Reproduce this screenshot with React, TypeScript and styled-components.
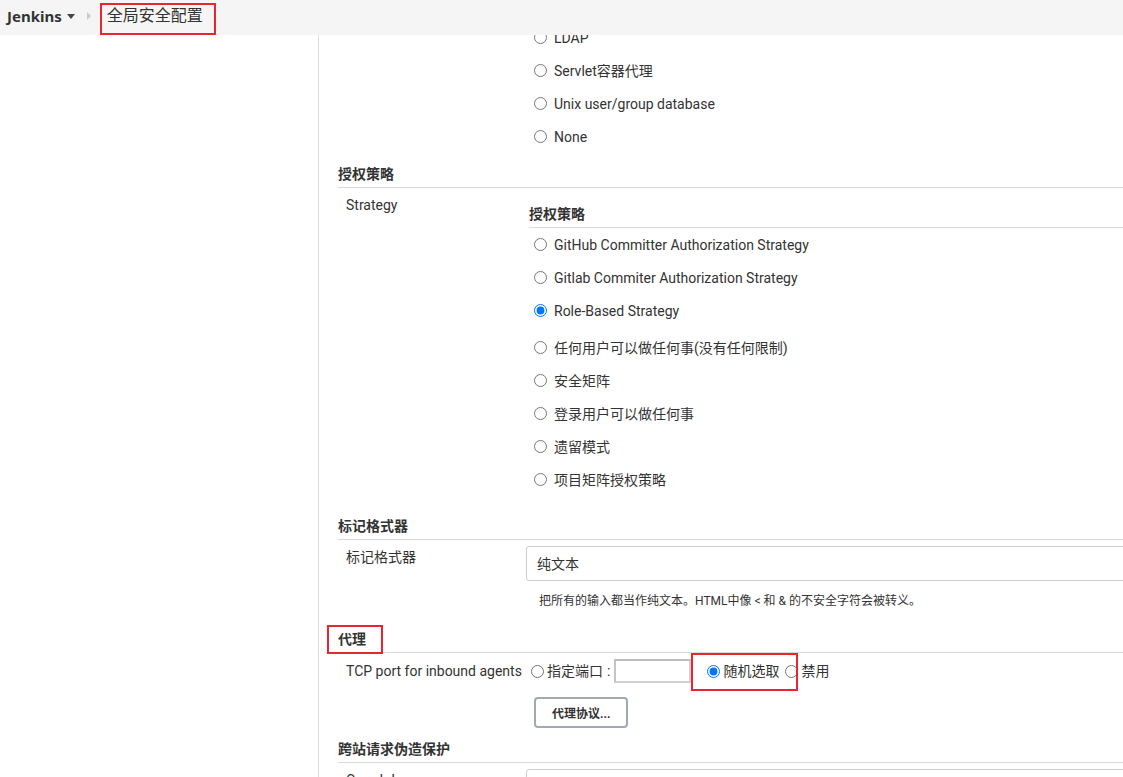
import React from "react";
import styled, { createGlobalStyle } from "styled-components";

const GlobalStyle = createGlobalStyle`
  html, body {
    margin: 0;
    padding: 0;
    height: 777px;
    overflow: hidden;
    background: #ffffff;
  }
  body {
    font-family: Roboto, "Noto Sans CJK SC", sans-serif;
    font-size: 14px;
    color: #333333;
  }
  * { box-sizing: border-box; }
`;

const Header = styled.header`
  position: fixed;
  top: 0;
  left: 0;
  right: 0;
  height: 35px;
  background: #f5f5f5;
  display: flex;
  align-items: center;
  padding: 0 0 3px 7px;
  z-index: 10;
`;

const Brand = styled.span`
  font-family: "Noto Sans", "Noto Sans CJK SC", sans-serif;
  font-weight: 700;
  font-size: 15px;
  color: #333;
  line-height: 20px;
`;

const Caret = styled.span`
  width: 0;
  height: 0;
  margin-left: 5px;
  border-left: 4px solid transparent;
  border-right: 4px solid transparent;
  border-top: 5px solid #444;
`;

const Separator = styled.span`
  width: 0;
  height: 0;
  margin-left: 12px;
  margin-right: 16px;
  border-top: 4px solid transparent;
  border-bottom: 4px solid transparent;
  border-left: 4px solid #cccccc;
`;

const Crumb = styled.span`
  font-size: 16px;
  line-height: 20px;
  color: #333;
`;

const Highlight = styled.span<{ $t: number; $r: number; $b: number; $l: number }>`
  position: relative;
  display: inline-flex;
  align-items: center;
  &::after {
    content: "";
    position: absolute;
    top: ${(p) => -p.$t}px;
    right: ${(p) => -p.$r}px;
    bottom: ${(p) => -p.$b}px;
    left: ${(p) => -p.$l}px;
    border: 2px solid #e8262e;
    pointer-events: none;
  }
`;

const Layout = styled.div`
  display: flex;
  height: 777px;
`;

const Sidebar = styled.aside`
  width: 319px;
  flex-shrink: 0;
  border-right: 1px solid #d6dfe0;
`;

const Main = styled.main`
  flex: 1;
  overflow: hidden;
  padding: 21px 0 0 19px;
`;

const Content = styled.div`
  width: calc(100% + 60px);
`;

const SectionTitle = styled.div<{ $mt: number }>`
  margin-top: ${(p) => p.$mt}px;
  font-weight: 700;
  line-height: 20px;
  padding-bottom: 3px;
  border-bottom: 1px solid #dadada;
`;

const Row = styled.div<{ $pt: number }>`
  display: grid;
  grid-template-columns: 180px 1fr;
  padding-left: 8px;
  padding-top: ${(p) => p.$pt}px;
`;

const RowLabel = styled.div`
  line-height: 20px;
  white-space: nowrap;
`;

const Field = styled.div`
  min-width: 0;
`;

const NestedTitle = styled.div`
  margin: 9px 0 0 3px;
  font-weight: 700;
  line-height: 20px;
  padding-bottom: 3px;
  border-bottom: 1px solid #dadada;
`;

const RadioList = styled.div`
  padding-left: 3px;
  display: flex;
  flex-direction: column;
`;

const RadioRow = styled.label<{ $mt?: number }>`
  height: 33px;
  display: flex;
  align-items: center;
  margin-top: ${(p) => p.$mt ?? 0}px;
  line-height: 20px;
`;

const Radio = styled.input.attrs({ type: "radio" })`
  width: 13px;
  height: 13px;
  margin: 0 7px 0 5px;
  flex-shrink: 0;
`;

const InlineRadio = styled.input.attrs({ type: "radio" })`
  width: 13px;
  height: 13px;
  margin: 0 3px 0 5px;
  flex-shrink: 0;
`;

const SelectBox = styled.div`
  margin-top: -1px;
  height: 35px;
  border: 1px solid #cccccc;
  border-radius: 3px;
  display: flex;
  align-items: center;
  padding-left: 10px;
  line-height: 20px;
`;

const Help = styled.div`
  margin-top: 12px;
  padding-left: 13px;
  font-size: 12px;
  line-height: 16px;
  color: #333;
`;

const InlineField = styled.div`
  display: flex;
  align-items: center;
  height: 24px;
  margin-top: -2px;
  line-height: 20px;
  white-space: nowrap;
`;

const PortInput = styled.input.attrs({ type: "text" })`
  width: 77px;
  height: 24px;
  margin: 0 11px 0 4px;
  border: 2px solid #d0d0d0;
  border-top-color: #bdbdbd;
  border-left-color: #c4c4c4;
  background: #fff;
  padding: 0 4px;
  font: inherit;
`;

const Colon = styled.span`
  margin-left: 4px;
`;

const Button = styled.button`
  margin: 14px 0 0 8px;
  height: 31px;
  padding: 0 16px;
  border: 2px solid #a3a9b0;
  border-radius: 4px;
  background: #ffffff;
  font-family: inherit;
  font-size: 12px;
  font-weight: 700;
  color: #333;
  cursor: pointer;
`;

const Gap = styled.span`
  width: 1px;
`;

const realmOptions = ["LDAP", "Servlet容器代理", "Unix user/group database", "None"];
const strategyA = [
  "GitHub Committer Authorization Strategy",
  "Gitlab Commiter Authorization Strategy",
  "Role-Based Strategy",
];
const strategyB = [
  "任何用户可以做任何事(没有任何限制)",
  "安全矩阵",
  "登录用户可以做任何事",
  "遗留模式",
  "项目矩阵授权策略",
];

export default function App() {
  return (
    <>
      <GlobalStyle />
      <Header>
        <Brand>Jenkins</Brand>
        <Caret />
        <Separator />
        <Highlight $t={3} $r={13} $b={9} $l={7}>
          <Crumb>全局安全配置</Crumb>
        </Highlight>
      </Header>
      <Layout>
        <Sidebar />
        <Main>
          <Content>
            <Row $pt={0}>
              <RowLabel />
              <Field>
                <RadioList>
                  {realmOptions.map((o) => (
                    <RadioRow key={o}>
                      <Radio name="realm" />
                      {o}
                    </RadioRow>
                  ))}
                </RadioList>
              </Field>
            </Row>

            <SectionTitle $mt={11}>授权策略</SectionTitle>
            <Row $pt={7}>
              <RowLabel>Strategy</RowLabel>
              <Field>
                <NestedTitle>授权策略</NestedTitle>
                <RadioList>
                  {strategyA.map((o) => (
                    <RadioRow key={o}>
                      <Radio name="strategy" defaultChecked={o === "Role-Based Strategy"} />
                      {o}
                    </RadioRow>
                  ))}
                  {strategyB.map((o, i) => (
                    <RadioRow key={o} $mt={i === 0 ? 4 : 0}>
                      <Radio name="strategy" />
                      {o}
                    </RadioRow>
                  ))}
                </RadioList>
              </Field>
            </Row>

            <SectionTitle $mt={20}>标记格式器</SectionTitle>
            <Row $pt={7}>
              <RowLabel>标记格式器</RowLabel>
              <Field>
                <SelectBox>纯文本</SelectBox>
                <Help>把所有的输入都当作纯文本。HTML中像 &lt; 和 &amp; 的不安全字符会被转义。</Help>
              </Field>
            </Row>

            <SectionTitle $mt={20}>
              <Highlight $t={4} $r={17} $b={5} $l={11}>
                代理
              </Highlight>
            </SectionTitle>
            <Row $pt={8}>
              <RowLabel>TCP port for inbound agents</RowLabel>
              <Field>
                <InlineField>
                  <InlineRadio name="port" />
                  指定端口<Colon>:</Colon>
                  <PortInput />
                  <Highlight $t={8} $r={19} $b={10} $l={11}>
                    <InlineRadio name="port" defaultChecked />
                    随机选取
                  </Highlight>
                  <Gap />
                  <InlineRadio name="port" />
                  禁用
                </InlineField>
                <Button type="button">代理协议...</Button>
              </Field>
            </Row>

            <SectionTitle $mt={11}>跨站请求伪造保护</SectionTitle>
            <Row $pt={7}>
              <RowLabel>Crumb Issuer</RowLabel>
              <Field>
                <SelectBox>Default Crumb Issuer</SelectBox>
              </Field>
            </Row>
          </Content>
        </Main>
      </Layout>
    </>
  );
}
